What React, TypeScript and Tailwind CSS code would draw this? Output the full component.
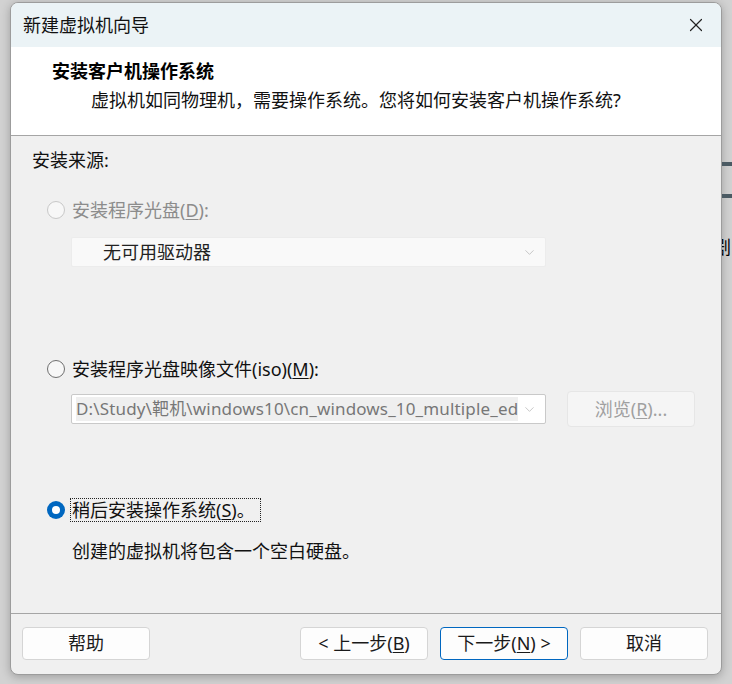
import { ChevronDown, X } from "lucide-react";

const font = "font-['Segoe_UI','Noto_Sans','Noto_Sans_CJK_SC',sans-serif]";

function Radio({ checked, disabled }: { checked?: boolean; disabled?: boolean }) {
  if (checked) {
    return (
      <span className="size-[18px] rounded-full bg-[#0067c0] grid place-items-center shrink-0">
        <span className="size-[8px] rounded-full bg-white" />
      </span>
    );
  }
  return (
    <span
      className={`size-[18px] rounded-full border shrink-0 ${
        disabled ? "border-[#c8c8c8] bg-[#f7f7f7]" : "border-[#6f6f6f] bg-[#f7f7f7]"
      }`}
    />
  );
}

function Btn({ children, primary }: { children: React.ReactNode; primary?: boolean }) {
  return (
    <button
      type="button"
      className={`w-[128px] h-[33px] rounded-[4px] bg-[#fdfdfd] text-[18px] text-[#1a1a1a] border ${
        primary ? "border-[#0067c0]" : "border-[#d5d5d5]"
      }`}
    >
      {children}
    </button>
  );
}

export default function App() {
  return (
    <div className={`w-[732px] h-[684px] bg-[#d2d2d2] flex overflow-hidden ${font}`}>
      <div className="pl-[10px] pt-[2px] pb-[9px] flex">
        <div className="w-[712px] h-[673px] rounded-[8px] border border-[#9c9c9c] bg-[#f0f0f0] overflow-hidden flex flex-col shadow-[0_2px_10px_rgba(0,0,0,0.25)]">
          {/* title bar */}
          <div className="h-[44px] bg-[#ebf3f6] flex items-center justify-between pl-[12px] pr-[14px]">
            <span className="text-[18px] text-[#111]">新建虚拟机向导</span>
            <X className="size-[22px] text-[#222]" strokeWidth={1.3} />
          </div>

          {/* header */}
          <div className="h-[89px] bg-white border-b border-[#a5a5a5] pl-[41px] pt-[12px]">
            <div className="text-[18px] font-bold text-black leading-[24px]">安装客户机操作系统</div>
            <div className="text-[18px] text-[#111] leading-[24px] mt-[5px] pl-[39px]">
              虚拟机如同物理机，需要操作系统。您将如何安装客户机操作系统?
            </div>
          </div>

          {/* body */}
          <div className="flex-1 pl-[21px] pt-[12px] text-[18px] text-[#111]">
            <div className="leading-[24px]">安装来源:</div>

            <div className="flex items-center gap-[7px] mt-[26px] pl-[15px] h-[24px] text-[#8c8c8c]">
              <Radio disabled />
              <span className="leading-[24px]">
                安装程序光盘(<span className="underline underline-offset-2">D</span>):
              </span>
            </div>
            <div className="mt-[15px] ml-[39px] w-[475px] h-[30px] bg-[#f9f9f9] border border-[#ececec] rounded-[2px] flex items-center justify-between pl-[31px] pr-[8px]">
              <span className="text-[#222] leading-[24px]">无可用驱动器</span>
              <ChevronDown className="size-[15px] text-[#b5b5b5]" strokeWidth={1.2} />
            </div>

            <div className="flex items-center gap-[7px] mt-[90px] pl-[15px] h-[24px]">
              <Radio />
              <span className="leading-[24px]">
                安装程序光盘映像文件(iso)(<span className="underline underline-offset-2">M</span>):
              </span>
            </div>
            <div className="flex items-center mt-[10px] ml-[39px] gap-[21px]">
              <div className="w-[475px] h-[30px] bg-white border border-[#c9c9c9] rounded-[2px] flex items-center justify-between pl-[4px] pr-[8px]">
                <span className="bg-[#efefef] text-[#777] text-[17px] tracking-[0.15px] leading-[24px] whitespace-nowrap">
                  D:\Study\靶机\windows10\cn_windows_10_multiple_ed
                </span>
                <ChevronDown className="size-[15px] text-[#b5b5b5] shrink-0" strokeWidth={1.2} />
              </div>
              <div className="w-[128px] h-[36px] bg-[#f5f5f5] border border-[#e6e6e6] rounded-[4px] grid place-items-center text-[#a0a0a0]">
                <span className="leading-[24px]">
                  浏览(<span className="underline underline-offset-2">R</span>)...
                </span>
              </div>
            </div>

            <div className="flex items-center gap-[5px] mt-[70px] pl-[15px] h-[26px]">
              <Radio checked />
              <span className="border border-dotted border-[#222] pl-[1px] pr-[5px] leading-[22px]">
                稍后安装操作系统(<span className="underline underline-offset-2">S</span>)。
              </span>
            </div>
            <div className="mt-[16px] pl-[40px] leading-[24px]">创建的虚拟机将包含一个空白硬盘。</div>
          </div>

          {/* footer */}
          <div className="h-[61px] border-t border-[#a5a5a5] flex items-center pl-[11px] pr-[13px] pb-[2px]">
            <Btn>帮助</Btn>
            <div className="flex-1" />
            <div className="flex gap-[12px]">
              <Btn>
                &lt; 上一步(<span className="underline underline-offset-2">B</span>)
              </Btn>
              <Btn primary>
                下一步(<span className="underline underline-offset-2">N</span>) &gt;
              </Btn>
              <Btn>取消</Btn>
            </div>
          </div>
        </div>
      </div>

      {/* window behind, peeking out on the right */}
      <div className="flex-1 flex flex-col pt-[162px] overflow-hidden">
        <div className="h-[4px] bg-[#4b5a63]" />
        <div className="h-[28px]" />
        <div className="h-[4px] bg-[#4b5a63]" />
        <div className="mt-[36px] text-[18px] text-black -ml-[9px] whitespace-nowrap">剧</div>
      </div>
    </div>
  );
}
